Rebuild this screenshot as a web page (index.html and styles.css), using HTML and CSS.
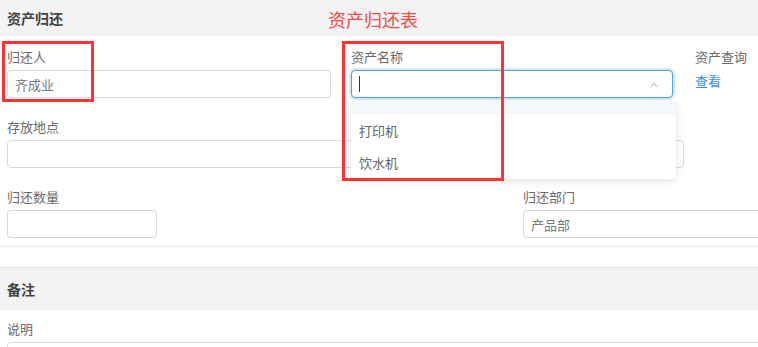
FILE: index.html
```html
<!DOCTYPE html>
<html lang="zh-CN">
<head>
  <meta charset="UTF-8">
  <meta name="viewport" content="width=device-width, initial-scale=1.0">
  <title>资产归还表</title>
  <link rel="stylesheet" href="styles.css">
</head>
<body>
  <div class="section-head">
    <span class="section-title">资产归还</span>
    <span class="page-title">资产归还表</span>
  </div>

  <div class="section-body">
    <div class="row">
      <div class="field w-324">
        <div class="label">归还人</div>
        <div class="input"><span class="value">齐成业</span></div>
      </div>
      <div class="field w-322 gap-20">
        <div class="label">资产名称</div>
        <div class="input select focused">
          <span class="caret"></span>
          <svg class="arrow" width="8" height="5" viewBox="0 0 8 5">
            <path d="M1 4.5 L4 1.5 L7 4.5" fill="none" stroke="#9a9a9a" stroke-width="1"/>
          </svg>
          <!-- 下拉选项 -->
          <div class="dropdown">
            <div class="option hover"></div>
            <div class="option">打印机</div>
            <div class="option">饮水机</div>
          </div>
        </div>
      </div>
      <div class="field gap-22">
        <div class="label">资产查询</div>
        <a class="link" href="#">查看</a>
      </div>
    </div>

    <div class="row">
      <div class="field w-677">
        <div class="label">存放地点</div>
        <div class="input"></div>
      </div>
    </div>

    <div class="row">
      <div class="field w-150">
        <div class="label">归还数量</div>
        <div class="input"></div>
      </div>
      <div class="field w-300 gap-366">
        <div class="label">归还部门</div>
        <div class="input"><span class="value">产品部</span></div>
      </div>
    </div>
  </div>

  <div class="spacer"></div>

  <div class="section-head tall">
    <span class="section-title">备注</span>
  </div>

  <div class="section-body last">
    <div class="field w-900">
      <div class="label">说明</div>
      <div class="input"></div>
    </div>
  </div>

  <!-- 标注框 -->
  <div class="mark mark-1"></div>
  <div class="mark mark-2"></div>
</body>
</html>
```

FILE: styles.css
```css
html, body {
  overflow: hidden;
}

body {
  margin: 0;
  width: 758px;
  height: 347px;
  position: relative;
  font-family: "Noto Sans CJK SC", "Noto Sans", sans-serif;
  font-size: 13px;
  color: #666;
  background: #fff;
}

.section-head {
  height: 36px;
  background-color: #f3f3f3;
  padding: 0 7px;
  display: flex;
  align-items: center;
}

.section-head.tall {
  height: 42px;
  border-top: 1px solid #e6e6e6;
}

.section-title {
  font-size: 14px;
  font-weight: bold;
  color: #444;
}

.page-title {
  margin-left: 265px;
  margin-top: 1px;
  font-size: 18px;
  color: #f54a4a;
}

.section-body {
  padding: 12px 0 8px 7px;
  border-bottom: 1px solid #e8e8e8;
  display: flex;
  flex-direction: column;
  gap: 20px;
}

.section-body.last {
  padding-top: 10px;
  border-bottom: none;
}

.spacer {
  height: 20px;
}

.row {
  display: flex;
}

.field {
  display: flex;
  flex-direction: column;
  gap: 2px;
  flex-shrink: 0;
}

.w-150 { width: 150px; }
.w-300 { width: 300px; }
.w-322 { width: 322px; }
.w-324 { width: 324px; }
.w-677 { width: 677px; }
.w-900 { width: 900px; }
.gap-20 { margin-left: 20px; }
.gap-22 { margin-left: 22px; }
.gap-366 { margin-left: 366px; }

.label {
  height: 20px;
  line-height: 17px;
  color: #6a6a6a;
}

.input {
  box-sizing: border-box;
  height: 28px;
  border: 1px solid #d9d9d9;
  border-radius: 4px;
  padding: 0 7px;
  display: flex;
  align-items: center;
  background: #fff;
}

.value {
  color: #777;
}

.select {
  position: relative;
}

.focused {
  border-color: #4aa3f0;
  box-shadow: 0 0 0 2px rgba(74, 163, 240, 0.22);
}

.caret {
  width: 1px;
  height: 16px;
  background: #333;
}

.arrow {
  margin-left: auto;
  margin-right: 7px;
}

.dropdown {
  position: absolute;
  top: 30px;
  left: -1px;
  width: 325px;
  background: #fff;
  border-radius: 4px;
  box-shadow: 0 2px 8px rgba(0, 0, 0, 0.12);
  overflow: hidden;
  z-index: 2;
}

.option {
  height: 32px;
  line-height: 32px;
  padding: 0 8px;
  color: #666;
}

.option.hover {
  height: 14px;
  background: #f5f9fe;
}

.link {
  line-height: 20px;
  color: #3a8ee6;
  text-decoration: none;
  margin-top: 1px;
}

.mark {
  position: absolute;
  border: 3px solid #f33;
  box-sizing: border-box;
  z-index: 3;
}

.mark-1 {
  left: 2px;
  top: 41px;
  width: 92px;
  height: 61px;
}

.mark-2 {
  left: 342px;
  top: 41px;
  width: 162px;
  height: 140px;
}
```
